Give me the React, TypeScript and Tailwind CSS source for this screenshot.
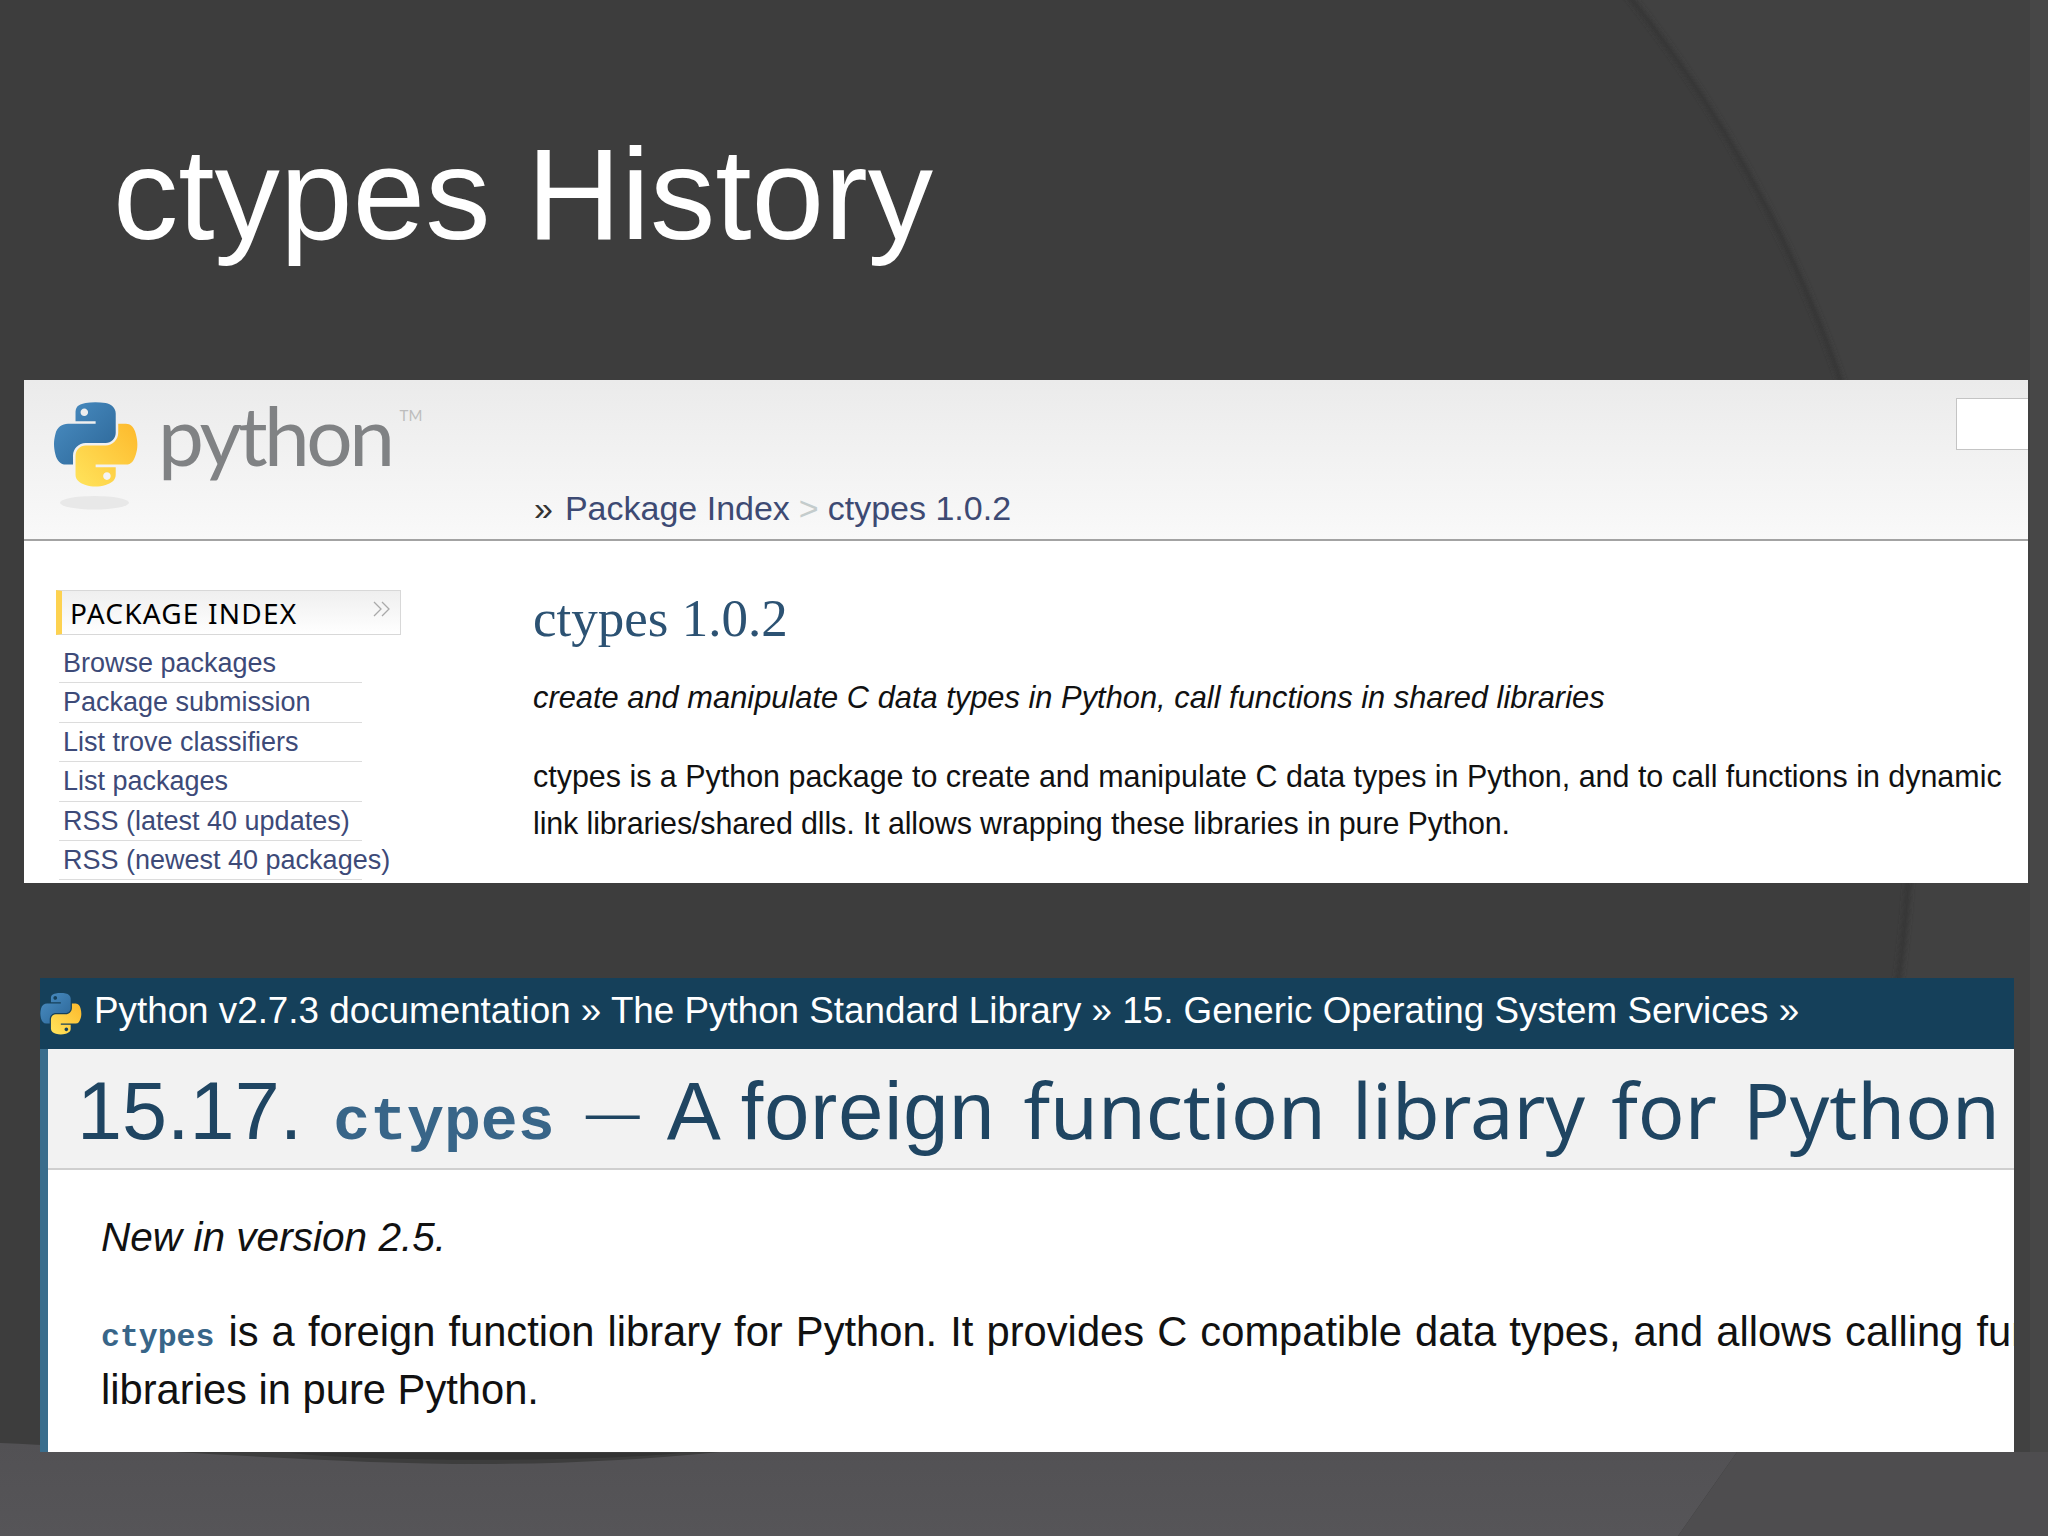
const pythonBlue = "M54.92 0C50.34 0.02 45.96 0.41 42.11 1.09 30.76 3.1 28.7 7.29 28.7 15.03V25.25H55.51V28.66H28.7 18.64C10.85 28.66 4.02 33.34 1.89 42.25-0.57 52.46-0.68 58.84 1.89 69.5 3.79 77.44 8.35 83.09 16.14 83.09H25.36V70.84C25.36 61.99 33.02 54.19 42.11 54.19H68.89C76.35 54.19 82.3 48.05 82.3 40.56V15.03C82.3 7.76 76.17 2.31 68.89 1.09 64.28 0.33 59.5-0.02 54.92 0ZM40.42 8.22C43.19 8.22 45.45 10.52 45.45 13.34 45.45 16.16 43.19 18.44 40.42 18.44 37.64 18.44 35.39 16.16 35.39 13.34 35.39 10.52 37.64 8.22 40.42 8.22Z"
const pythonYellow = "M85.64 28.66V40.56C85.64 49.79 77.81 57.56 68.89 57.56H42.11C34.77 57.56 28.7 63.84 28.7 71.19V96.72C28.7 103.99 35.02 108.26 42.11 110.34 50.59 112.84 58.73 113.29 68.89 110.34 75.64 108.39 82.3 104.46 82.3 96.72V86.5H55.51V83.09H82.3 95.7C103.5 83.09 106.4 77.66 109.11 69.5 111.91 61.1 111.85 53.02 109.11 42.25 107.19 34.49 103.51 28.66 95.7 28.66ZM70.57 93.31C73.35 93.31 75.6 95.59 75.6 98.41 75.6 101.23 73.35 103.53 70.57 103.53 67.8 103.53 65.54 101.23 65.54 98.41 65.54 95.59 67.8 93.31 70.57 93.31Z"

function PythonLogo({ className, shadow }: { className: string; shadow?: boolean }) {
    return (
        <svg className={className} viewBox={shadow ? "0 0 112 146" : "0 0 112 114"} fill="none">
            <defs>
                <linearGradient id={shadow ? "blueA" : "blueB"} x1="0" y1="0" x2="1" y2="1">
                    <stop offset="0" stopColor="#4b8fc4" />
                    <stop offset="1" stopColor="#2b6596" />
                </linearGradient>
                <linearGradient id={shadow ? "yellowA" : "yellowB"} x1="0" y1="1" x2="1" y2="0">
                    <stop offset="0" stopColor="#ffe45c" />
                    <stop offset="1" stopColor="#fdb92c" />
                </linearGradient>
            </defs>
            <path d={pythonBlue} fill={`url(#${shadow ? "blueA" : "blueB"})`} />
            <path d={pythonYellow} fill={`url(#${shadow ? "yellowA" : "yellowB"})`} />
            {shadow && <ellipse cx="54" cy="134" rx="46" ry="9" fill="#e8e8e8" />}
        </svg>
    )
}

function SlideBackground() {
    return (
        <svg className="absolute inset-0 h-[1536px] w-[2048px]" viewBox="0 0 2048 1536">
            <defs>
                <linearGradient id="floor" x1="0" y1="0" x2="0" y2="1">
                    <stop offset="0" stopColor="#525154" />
                    <stop offset="1" stopColor="#565558" />
                </linearGradient>
                <filter id="soft">
                    <feGaussianBlur stdDeviation="2.5" />
                </filter>
            </defs>
            <rect width="2048" height="1536" fill="#414141" />
            <rect x="2030" width="18" height="1536" fill="#474747" />
            <circle cx="623" cy="800" r="1289" fill="#3d3d3d" />
            <circle cx="623" cy="800" r="1288" fill="none" stroke="#353535" strokeWidth="5" filter="url(#soft)" />
            <path d="M0 1443C200 1452 340 1464 480 1464 560 1464 640 1460 720 1452L1737 1452 1678 1536H0Z" fill="url(#floor)" />
            <path d="M1737 1452L2048 1452V1536H1678Z" fill="#4e4d4f" />
            <path d="M290 1453C370 1462 590 1462 680 1453Z" fill="#333333" />
        </svg>
    )
}

const packageLinks = [
    "Browse packages",
    "Package submission",
    "List trove classifiers",
    "List packages",
    "RSS (latest 40 updates)",
    "RSS (newest 40 packages)",
]

export default function App() {
    return (
        <div className="relative h-[1536px] w-[2048px] overflow-hidden font-['Liberation_Sans',sans-serif]">
            <SlideBackground />
            <div className="relative">
                <div className="h-[380px] pl-[113px] pt-[129px]">
                    <h1 className="text-[130.6px] leading-[130px] text-white whitespace-nowrap">ctypes History</h1>
                </div>

                <div className="ml-[24px] h-[503px] w-[2004px] overflow-hidden bg-white">
                    <div className="flex h-[161px] border-b-2 border-[#a3a3a3] bg-gradient-to-b from-[#ebebeb] to-[#f9f9f9]">
                        <div className="flex w-[509px] shrink-0 items-start">
                            <PythonLogo className="ml-[30px] mt-[22px] h-[110px] w-[84px] shrink-0" shadow />
                            <span className="ml-[20px] mt-[-1px] font-['Lato',sans-serif] text-[82px] leading-[110px] tracking-[-3.5px] text-[#808284]">python</span>
                            <span className="ml-[8px] mt-[28px] font-['Lato',sans-serif] text-[15px] leading-[15px] text-[#bdbdbd]">TM</span>
                        </div>
                        <div className="ml-[1px] flex self-end pb-[11px] text-[34px] leading-[40px] whitespace-nowrap text-[#3d4a73]">
                            <span className="mr-[12px] text-[#333333]">»</span>
                            <span>Package Index</span>
                            <span className="mx-[9px] text-[#c4cccc]">&gt;</span>
                            <span>ctypes 1.0.2</span>
                        </div>
                        <div className="ml-auto mt-[18px] h-[52px] w-[72px] border border-r-0 border-[#c4c4c4] bg-white" />
                    </div>

                    <div className="flex pt-[49px]">
                        <div className="w-[509px] shrink-0 pl-[32px]">
                            <div className="flex h-[45px] w-[345px] items-center justify-between border border-l-[6px] border-[#d8d8d8] border-l-[#fdd250] bg-gradient-to-b from-[#efefef] to-white pl-[8px] pr-[8px]">
                                <span className="font-['Noto_Sans',sans-serif] text-[28px] leading-[32px] tracking-[1.2px] text-black">PACKAGE INDEX</span>
                                <svg className="mb-[8px] h-[16px] w-[20px]" viewBox="0 0 20 16" fill="none" stroke="#a9a9a9" strokeWidth="1.3">
                                    <path d="M2 1l7 7-7 7M10 1l7 7-7 7" />
                                </svg>
                            </div>
                            <ul className="ml-[3px] mt-[9px]">
                                {packageLinks.map((link) => (
                                    <li key={link} className="h-[39.4px] w-[303px] border-b border-[#dcdcdc] pl-[4px] text-[27px] leading-[38px] whitespace-nowrap text-[#3d4a78]">
                                        {link}
                                    </li>
                                ))}
                            </ul>
                        </div>
                        <div className="min-w-0 flex-1">
                            <h2 className="mt-[-2px] font-['Liberation_Serif',serif] text-[53px] leading-[60px] text-[#2c5273]">ctypes 1.0.2</h2>
                            <p className="mt-[28px] text-[30.85px] leading-[44px] whitespace-nowrap text-[#111111] italic">create and manipulate C data types in Python, call functions in shared libraries</p>
                            <p className="mt-[33px] text-[30.45px] leading-[47px] whitespace-nowrap text-[#111111]">
                                ctypes is a Python package to create and manipulate C data types in Python, and to call functions in dynamic
                                <br />
                                <span className="tracking-[-0.12px]">link libraries/shared dlls. It allows wrapping these libraries in pure Python.</span>
                            </p>
                        </div>
                    </div>
                </div>

                <div className="ml-[40px] mt-[95px] h-[474px] w-[1974px] overflow-hidden bg-white">
                    <div className="flex h-[71px] items-center bg-[#15405a] pb-[5px] text-[36.8px] whitespace-nowrap text-white">
                        <PythonLogo className="mt-[5px] h-[42px] w-[42px] shrink-0" />
                        <span className="ml-[12px]">Python v2.7.3 documentation » The Python Standard Library » 15. Generic Operating System Services »</span>
                    </div>
                    <div className="h-[403px] border-l-[8px] border-[#3a6d8c]">
                        <div className="flex h-[121px] items-baseline border-b-2 border-[#cfcfcf] bg-[#f2f2f2] pl-[29px] pt-[10px] text-[81px] leading-[100px] whitespace-nowrap text-[#1f4562]">
                            <span>15.17.</span>
                            <span className="ml-[31px] font-['Liberation_Mono',monospace] text-[61.5px] font-bold text-[#386588]">ctypes</span>
                            <span className="relative -top-[8px] ml-[31px] text-[54px]">—</span>
                            <span className="ml-[27px] tracking-[1px]">A foreign</span>
                            <span className="ml-[28px] font-['Noto_Sans',sans-serif] text-[77.5px] [word-spacing:6px]">function library for Python</span>
                        </div>
                        <div className="pl-[53px] whitespace-nowrap text-[#111111]">
                            <p className="mt-[43px] text-[40.6px] leading-[48px] italic">New in version 2.5.</p>
                            <p className="mt-[42px] text-[41.7px] leading-[57.5px]">
                                <span className="font-['Liberation_Mono',monospace] text-[31.5px] leading-[20px] font-bold text-[#386588]">ctypes</span>
                                <span className="ml-[14px] [word-spacing:1.5px]">is a foreign function library for Python. It provides C compatible data types, and allows calling functions</span>
                                <br />
                                libraries in pure Python.
                            </p>
                        </div>
                    </div>
                </div>
            </div>
        </div>
    )
}
